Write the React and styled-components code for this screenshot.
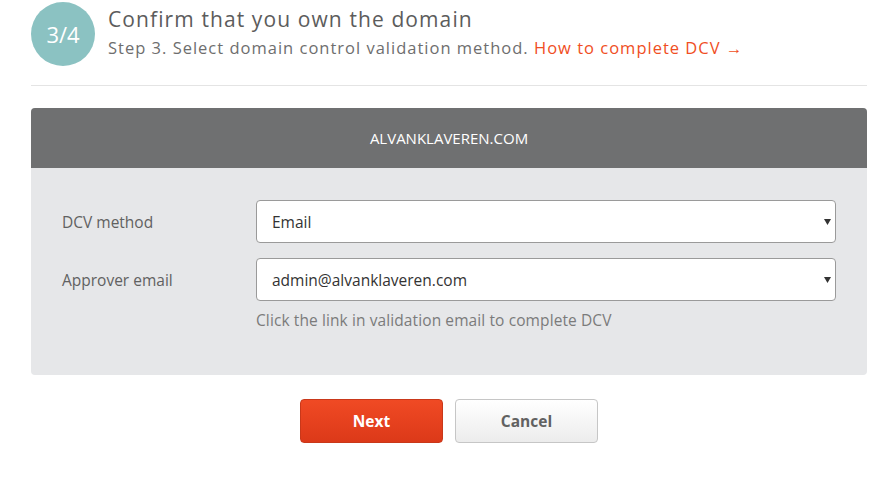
import styled, { createGlobalStyle } from 'styled-components';

const GlobalStyle = createGlobalStyle`
    body {
        margin: 0;
        background: #ffffff;
        font-family: 'Open Sans', 'Liberation Sans', sans-serif;
    }
`

function App() {
    return (
        <>
            <GlobalStyle />
            <Page>
                <StepHeader>
                    <StepBadge>3/4</StepBadge>
                    <StepText>
                        <h1>Confirm that you own the domain</h1>
                        <p>
                            Step 3. Select domain control validation method.{' '}
                            <a href="#dcv">How to complete DCV →</a>
                        </p>
                    </StepText>
                </StepHeader>
                <Divider />
                <Card>
                    <CardHeader>ALVANKLAVEREN.COM</CardHeader>
                    <CardBody>
                        <FormRow>
                            <Label>DCV method</Label>
                            <Select defaultValue="email">
                                <option value="email">Email</option>
                                <option value="http">HTTP</option>
                                <option value="dns">DNS</option>
                            </Select>
                        </FormRow>
                        <FormRow>
                            <Label>Approver email</Label>
                            <Select defaultValue="admin">
                                <option value="admin">admin@alvanklaveren.com</option>
                            </Select>
                        </FormRow>
                        <Hint>Click the link in validation email to complete DCV</Hint>
                    </CardBody>
                </Card>
                <Actions>
                    <Button primary>Next</Button>
                    <Button>Cancel</Button>
                </Actions>
            </Page>
        </>
    )
}

export default App;

const Page = styled.div`
    width: 836px;
    margin-left: 31px;
`

const StepHeader = styled.div`
    display: flex;
    align-items: center;
    gap: 13px;
    padding-top: 2px;
`

const StepBadge = styled.div`
    width: 64px;
    height: 64px;
    border-radius: 50%;
    background: #8bc2c2;
    color: #ffffff;
    font-size: 22px;
    display: flex;
    align-items: center;
    justify-content: center;
    flex-shrink: 0;
`

const StepText = styled.div`
    margin-top: -3px;

    h1 {
        margin: 0;
        font-size: 21px;
        font-weight: 400;
        letter-spacing: 1.1px;
        line-height: 26px;
        color: #5c5c5c;
    }

    p {
        margin: 5px 0 0;
        font-size: 16.5px;
        letter-spacing: 1px;
        line-height: 22px;
        color: #6e6e6e;
    }

    a {
        color: #f04e23;
        text-decoration: none;
    }
`

const Divider = styled.div`
    height: 1px;
    background: #e4e4e4;
    margin-top: 19px;
`

const Card = styled.div`
    margin-top: 22px;
    border-radius: 4px;
    overflow: hidden;
    background: #e6e7e9;
`

const CardHeader = styled.div`
    height: 60px;
    background: #6f7071;
    color: #ffffff;
    font-size: 15px;
    display: flex;
    align-items: center;
    justify-content: center;
`

const CardBody = styled.div`
    padding: 32px 31px 44px;
    display: flex;
    flex-direction: column;
    gap: 15px;
`

const FormRow = styled.div`
    display: flex;
    align-items: center;
`

const Label = styled.div`
    width: 194px;
    font-size: 15.5px;
    color: #616161;
`

const Select = styled.select`
    width: 580px;
    height: 43px;
    border: 1px solid #9a9a9a;
    border-radius: 4px;
    background: #ffffff url("data:image/svg+xml;utf8,<svg xmlns='http://www.w3.org/2000/svg' width='7' height='6'><path d='M0 0h7L3.5 6z' fill='%23333'/></svg>") no-repeat right 4px center;
    appearance: none;
    padding: 0 24px 0 15px;
    font-family: inherit;
    font-size: 15.5px;
    color: #333333;
`

const Hint = styled.div`
    margin-left: 194px;
    margin-top: -7px;
    font-size: 15.5px;
    letter-spacing: 0.1px;
    color: #7b7b7b;
`

const Actions = styled.div`
    display: flex;
    justify-content: center;
    gap: 12px;
    margin-top: 24px;
`

const Button = styled.button`
    width: 143px;
    height: 44px;
    border-radius: 4px;
    font-family: inherit;
    font-size: 15.5px;
    font-weight: 700;
    cursor: pointer;
    border: 1px solid ${props => props.primary ? '#c9381a' : '#c6c6c6'};
    color: ${props => props.primary ? '#ffffff' : '#616161'};
    background: ${props => props.primary
        ? 'linear-gradient(#f04a24, #dc3919)'
        : 'linear-gradient(#ffffff, #ececec)'};
`
